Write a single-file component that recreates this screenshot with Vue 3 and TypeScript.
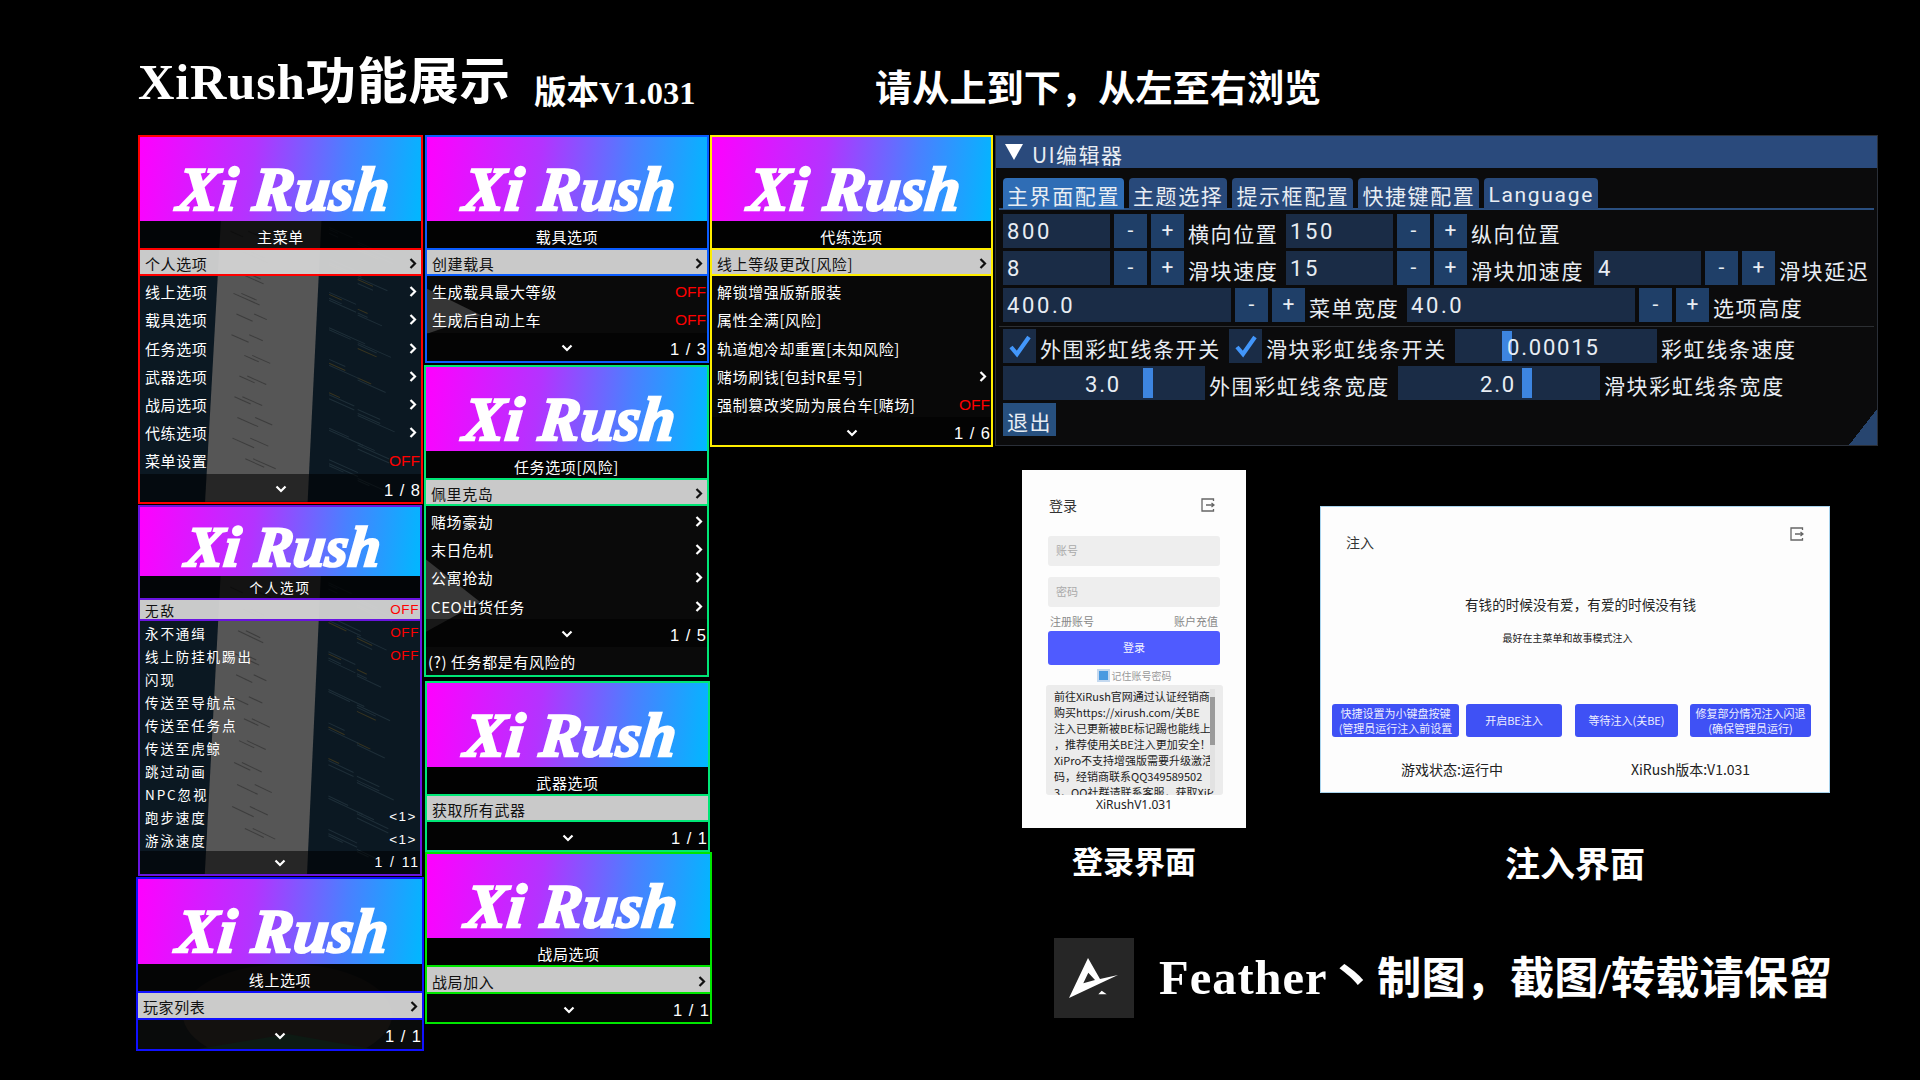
<template>
  <div class="page">
    <header class="head">
      <h1 class="title">XiRush功能展示</h1>
      <span class="version">版本V1.031</span>
      <span class="hint">请从上到下，从左至右浏览</span>
    </header>

    <main class="board">
      <div v-for="(col, c) in columns" :key="c" class="col" :class="`col-${c + 1}`">
        <section v-for="m in col" :key="m.title" class="menu" :class="m.cls">
          <div class="banner"><span class="logo">Xi Rush</span></div>
          <div class="menu-body">
            <svg v-if="m.bg" class="menu-bg" viewBox="0 0 285 285" preserveAspectRatio="none">
              <template v-if="m.bg === 'code'">
                <rect width="285" height="285" fill="#0b1822" />
                <polygon points="82,0 184,0 170,285 66,285" fill="#565656" />
                <rect
                  v-for="(l, i) in codeLines"
                  :key="i"
                  :x="l.x"
                  :y="l.y"
                  :width="l.w"
                  height="1"
                  :fill="l.c"
                  :transform="`rotate(24 ${l.x} ${l.y})`"
                />
              </template>
              <template v-else-if="m.bg === 'face'">
                <rect width="285" height="285" fill="#15191a" />
                <ellipse cx="150" cy="170" rx="105" ry="170" fill="#2a2623" />
                <polygon points="60,285 150,235 235,285" fill="#1d3a2a" />
              </template>
              <template v-else>
                <rect width="285" height="285" fill="#0a0a0a" />
                <polygon points="0,138 0,230 55,192" fill="#363636" />
              </template>
            </svg>
            <div class="menu-title">{{ m.title }}</div>
            <div
              v-for="(row, i) in m.rows"
              :key="row.label"
              class="row"
              :class="{ selected: i === 0 }"
            >
              <span class="row-label">{{ row.label }}</span>
              <svg v-if="row.right === 'arrow'" class="arrow" viewBox="0 0 8 12">
                <path d="M1.5 1.5 6 6l-4.5 4.5" fill="none" stroke="currentColor" stroke-width="2.2" />
              </svg>
              <span v-else-if="row.right === 'OFF'" class="off">OFF</span>
              <span v-else-if="row.right" class="value">{{ row.right }}</span>
            </div>
            <div class="menu-foot">
              <svg class="chevron" viewBox="0 0 12 8">
                <path d="M1.5 1.5 6 6l4.5-4.5" fill="none" stroke="#fff" stroke-width="2.2" />
              </svg>
              <span class="pager">{{ m.page }}</span>
            </div>
            <div v-if="m.note" class="menu-note">{{ m.note }}</div>
          </div>
        </section>
      </div>

      <div class="right">
        <section class="editor">
          <div class="editor-head">
            <span class="tri"></span>
            <span>UI编辑器</span>
          </div>
          <div class="tabs">
            <span
              v-for="(t, i) in tabs"
              :key="t"
              class="tab"
              :class="{ active: i === 0, latin: t === 'Language' }"
            >{{ t }}</span>
          </div>

          <div class="ed-row">
            <template v-for="f in row1" :key="f.label">
              <span class="ed-input" :class="f.cls">{{ f.value }}</span>
              <span class="ed-btn">-</span>
              <span class="ed-btn">+</span>
              <span class="ed-label" :class="f.cls">{{ f.label }}</span>
            </template>
          </div>
          <div class="ed-row">
            <template v-for="f in row2" :key="f.label">
              <span class="ed-input" :class="f.cls">{{ f.value }}</span>
              <span class="ed-btn">-</span>
              <span class="ed-btn">+</span>
              <span class="ed-label" :class="f.cls">{{ f.label }}</span>
            </template>
          </div>
          <div class="ed-row">
            <template v-for="f in row3" :key="f.label">
              <span class="ed-input wide">{{ f.value }}</span>
              <span class="ed-btn">-</span>
              <span class="ed-btn">+</span>
              <span class="ed-label" :class="f.cls">{{ f.label }}</span>
            </template>
          </div>
          <div class="ed-sep"></div>

          <div class="ed-row">
            <span class="ed-check">
              <svg viewBox="0 0 24 24"><path d="M3 13l6 7L21 3" fill="none" stroke="#4296fa" stroke-width="4.2" /></svg>
            </span>
            <span class="ed-label check-label">外围彩虹线条开关</span>
            <span class="ed-check">
              <svg viewBox="0 0 24 24"><path d="M3 13l6 7L21 3" fill="none" stroke="#4296fa" stroke-width="4.2" /></svg>
            </span>
            <span class="ed-label check-label">滑块彩虹线条开关</span>
            <span class="ed-slider speed">
              <i class="grab" :style="{ left: '47px' }"></i>
              <b>0.00015</b>
            </span>
            <span class="ed-label speed-label">彩虹线条速度</span>
          </div>
          <div class="ed-row">
            <span class="ed-slider">
              <i class="grab" :style="{ left: '140px' }"></i>
              <b class="mid">3.0</b>
            </span>
            <span class="ed-label width-label">外围彩虹线条宽度</span>
            <span class="ed-slider">
              <i class="grab" :style="{ left: '124px' }"></i>
              <b class="mid">2.0</b>
            </span>
            <span class="ed-label width-label">滑块彩虹线条宽度</span>
          </div>
          <div class="ed-row">
            <span class="ed-exit">退出</span>
          </div>
          <span class="grip"></span>
        </section>

        <div class="shots">
          <div class="shot shot-login">
            <div class="login">
              <div class="win-head">
                <span>登录</span>
                <svg class="exit" viewBox="0 0 14 14">
                  <path d="M12.5 3V1H1v12h11.500v-2M5 7h8M10.500 5l2.500 2-2.500 2" fill="none" stroke="#666" stroke-width="1.300" />
                </svg>
              </div>
              <div class="field">账号</div>
              <div class="field">密码</div>
              <div class="login-links"><span>注册账号</span><span>账户充值</span></div>
              <div class="login-btn">登录</div>
              <div class="remember"><i></i><span>记住账号密码</span></div>
              <div class="notice">
                <div class="notice-text">
                  <div v-for="l in noticeLines" :key="l">{{ l }}</div>
                </div>
                <span class="scroll"><i></i></span>
              </div>
              <div class="login-ver">XiRushV1.031</div>
            </div>
            <div class="caption">登录界面</div>
          </div>

          <div class="shot shot-inject">
            <div class="inject">
              <div class="win-head">
                <span>注入</span>
                <svg class="exit" viewBox="0 0 14 14">
                  <path d="M12.5 3V1H1v12h11.500v-2M5 7h8M10.500 5l2.500 2-2.500 2" fill="none" stroke="#666" stroke-width="1.300" />
                </svg>
              </div>
              <p class="inj-main">有钱的时候没有爱，有爱的时候没有钱</p>
              <p class="inj-sub">最好在主菜单和故事模式注入</p>
              <div class="inj-btns">
                <span class="b1">快捷设置为小键盘按键<br />(管理员运行注入前设置</span>
                <span class="b2">开启BE注入</span>
                <span class="b3">等待注入(关BE)</span>
                <span class="b4">修复部分情况注入闪退<br />(确保管理员运行)</span>
              </div>
              <div class="inj-foot">
                <span>游戏状态:运行中</span>
                <span>XiRush版本:V1.031</span>
              </div>
            </div>
            <div class="caption">注入界面</div>
          </div>
        </div>

        <div class="credit">
          <span class="credit-logo">
            <svg viewBox="0 0 80 80">
              <path
                fill-rule="evenodd"
                d="M34 20 46 41 64 37 15 60zM34.300 34.700 29.300 45.300 41 42z"
                fill="#fff"
              />
              <path d="M44.300 56.300 47.700 52.700 52.700 56.300z" fill="#fff" />
            </svg>
          </span>
          <span class="credit-text"><span class="credit-name">Feather丶</span>制图，截图/转载请保留</span>
        </div>
      </div>
    </main>
  </div>
</template>

<script setup lang="ts">
interface Row {
  label: string;
  right?: string;
}

interface Menu {
  title: string;
  cls: string;
  bg?: string;
  rows: Row[];
  page: string;
  note?: string;
}

const arrow = "arrow";

const columns: Menu[][] = [
  [
    {
      title: "主菜单",
      cls: "m-main",
      bg: "code",
      page: "1 / 8",
      rows: [
        { label: "个人选项", right: arrow },
        { label: "线上选项", right: arrow },
        { label: "载具选项", right: arrow },
        { label: "任务选项", right: arrow },
        { label: "武器选项", right: arrow },
        { label: "战局选项", right: arrow },
        { label: "代练选项", right: arrow },
        { label: "菜单设置", right: "OFF" },
      ],
    },
    {
      title: "个人选项",
      cls: "m-self",
      bg: "code",
      page: "1 / 11",
      rows: [
        { label: "无敌", right: "OFF" },
        { label: "永不通缉", right: "OFF" },
        { label: "线上防挂机踢出", right: "OFF" },
        { label: "闪现" },
        { label: "传送至导航点" },
        { label: "传送至任务点" },
        { label: "传送至虎鲸" },
        { label: "跳过动画" },
        { label: "NPC忽视" },
        { label: "跑步速度", right: "<1>" },
        { label: "游泳速度", right: "<1>" },
      ],
    },
    {
      title: "线上选项",
      cls: "m-online",
      bg: "face",
      page: "1 / 1",
      rows: [{ label: "玩家列表", right: arrow }],
    },
  ],
  [
    {
      title: "载具选项",
      cls: "m-car",
      bg: "dark",
      page: "1 / 3",
      rows: [
        { label: "创建载具", right: arrow },
        { label: "生成载具最大等级", right: "OFF" },
        { label: "生成后自动上车", right: "OFF" },
      ],
    },
    {
      title: "任务选项[风险]",
      cls: "m-task",
      bg: "dark",
      page: "1 / 5",
      note: "(?) 任务都是有风险的",
      rows: [
        { label: "佩里克岛", right: arrow },
        { label: "赌场豪劫", right: arrow },
        { label: "末日危机", right: arrow },
        { label: "公寓抢劫", right: arrow },
        { label: "CEO出货任务", right: arrow },
      ],
    },
    {
      title: "武器选项",
      cls: "m-weapon",
      page: "1 / 1",
      rows: [{ label: "获取所有武器" }],
    },
    {
      title: "战局选项",
      cls: "m-session",
      page: "1 / 1",
      rows: [{ label: "战局加入", right: arrow }],
    },
  ],
  [
    {
      title: "代练选项",
      cls: "m-boost",
      page: "1 / 6",
      rows: [
        { label: "线上等级更改[风险]", right: arrow },
        { label: "解锁增强版新服装" },
        { label: "属性全满[风险]" },
        { label: "轨道炮冷却重置[未知风险]" },
        { label: "赌场刷钱[包封R星号]", right: arrow },
        { label: "强制篡改奖励为展台车[赌场]", right: "OFF" },
      ],
    },
  ],
];

// faint code lines behind the two screenshot-backed menus
const codeLines = Array.from({ length: 70 }, (_, i) => {
  const inTree = i % 3 === 0;
  return {
    x: inTree ? 92 + ((i * 7) % 26) : 192 + ((i * 29) % 58),
    y: inTree ? 10 + (i % 36) * 7 : 4 + (i * 17) % 270,
    w: inTree ? 14 + ((i * 11) % 16) : 10 + ((i * 13) % 32),
    c: inTree ? "#3d3d3d" : i % 5 === 0 ? "#38341f" : "#1e2e38",
  };
});

const tabs = ["主界面配置", "主题选择", "提示框配置", "快捷键配置", "Language"];

const row1 = [
  { value: "800", label: "横向位置", cls: "" },
  { value: "150", label: "纵向位置", cls: "" },
];
const row2 = [
  { value: "8", label: "滑块速度", cls: "" },
  { value: "15", label: "滑块加速度", cls: "five" },
  { value: "4", label: "滑块延迟", cls: "" },
];
const row3 = [
  { value: "400.0", label: "菜单宽度", cls: "" },
  { value: "40.0", label: "选项高度", cls: "" },
];

const noticeLines = [
  "前往XiRush官网通过认证经销商",
  "购买https://xirush.com/关BE",
  "注入已更新被BE标记踢也能线上",
  "，推荐使用关BE注入更加安全！",
  "XiPro不支持增强版需要升级激活",
  "码，经销商联系QQ349589502",
  "3，QQ社群请联系客服，获取XiP",
];
</script>

<style>
html,
body {
  margin: 0;
  background: #000;
  overflow: hidden;
}
</style>

<style scoped>
.page {
  width: 1920px;
  height: 1080px;
  background: #000;
  color: #fff;
  font-family: "Noto Sans CJK SC", sans-serif;
  overflow: hidden;
}

.head {
  height: 135px;
  box-sizing: border-box;
  padding-left: 138px;
  display: flex;
  align-items: flex-start;
  font-family: "Liberation Serif", "Noto Sans CJK SC", serif;
  font-weight: 700;
}

.title {
  margin: 46px 0 0;
  width: 396px;
  font-size: 50.500px;
  line-height: 72px;
  font-weight: 700;
  letter-spacing: 0.800px;
  white-space: nowrap;
}

.version {
  margin-top: 69px;
  width: 341px;
  font-size: 32.500px;
  line-height: 48px;
  white-space: nowrap;
}

.hint {
  margin-top: 62px;
  font-size: 37.200px;
  line-height: 56px;
}

.board {
  display: flex;
  align-items: flex-start;
}

.col {
  display: flex;
  flex-direction: column;
  align-items: flex-start;
}

.col-1 {
  width: 288px;
  margin-left: 136px;
}

.col-2 {
  width: 286px;
}

.col-3 {
  width: 285px;
}

/* game menus */
.menu {
  --accent: #f00;
  --banner-h: 84px;
  --title-h: 27px;
  --row-h: 28.2px;
  --logo-size: 62px;
  --logo-top: 20px;
  --row-font: 15px;
  --row-space: 0.6px;
  --text-drop: 3px;
  box-sizing: border-box;
  border: 2px solid var(--accent);
  background: #080808;
  flex: none;
}

.m-main {
  width: 285px;
  margin-left: 2px;
}

.m-self {
  --accent: #6a14e0;
  --banner-h: 69px;
  --title-h: 22px;
  --row-h: 23px;
  --logo-size: 57px;
  --logo-top: 11px;
  --row-font: 13.500px;
  --row-space: 1.9px;
  --text-drop: 1px;
  width: 284px;
  margin: 1px 0 0 2px;
}

.m-online {
  --accent: #1010ff;
  --banner-h: 85px;
  --row-h: 29px;
  width: 288px;
  margin-top: 1px;
}

.m-car {
  --accent: #0a5cff;
  width: 284px;
  margin-left: 1px;
}

.m-task {
  --accent: #00e676;
  width: 285px;
  margin-top: 2px;
}

.m-weapon {
  --accent: #00e676;
  width: 285px;
  margin: 4px 0 0 1px;
}

.m-session {
  --accent: #00e600;
  --row-h: 28.6px;
  width: 287px;
  margin-left: 1px;
}

.m-boost {
  --accent: #ffee00;
  width: 283px;
}

.banner {
  height: var(--banner-h);
  box-sizing: border-box;
  padding: var(--logo-top) 0 0 7px;
  background: linear-gradient(97deg, #ff00ff 0%, #b433ff 40%, #4a80ff 72%, #00b8ff 100%);
  display: flex;
  align-items: center;
  justify-content: center;
}

.logo {
  font-family: "Liberation Serif", serif;
  font-style: italic;
  font-weight: 700;
  font-size: var(--logo-size);
  line-height: 1;
  white-space: nowrap;
  color: #fff;
  -webkit-text-stroke: 2.5px #fff;
  letter-spacing: 0.5px;
  transform: skewX(-6deg);
}

.menu-body {
  position: relative;
}

.menu-bg {
  position: absolute;
  inset: 0;
  width: 100%;
  height: 100%;
}

.menu-title,
.row,
.menu-foot,
.menu-note {
  position: relative;
}

.menu-title {
  height: var(--title-h);
  box-sizing: border-box;
  padding-top: var(--text-drop);
  line-height: calc(var(--title-h) - 1px);
  background: rgba(0, 0, 0, 0.78);
  text-align: center;
  font-size: var(--row-font);
  letter-spacing: var(--row-space);
}

.row {
  height: var(--row-h);
  display: flex;
  align-items: center;
  justify-content: space-between;
  box-sizing: border-box;
  padding: var(--text-drop) 3px 0 5px;
  font-size: var(--row-font);
  letter-spacing: var(--row-space);
  white-space: nowrap;
}

.row.selected {
  background: rgba(212, 212, 212, 0.95);
  color: #111;
  border-top: 2px solid var(--accent);
  border-bottom: 2px solid var(--accent);
}

.arrow {
  width: 8px;
  height: 13px;
  margin-right: 1px;
}

.off {
  color: #f00;
  font-family: "Liberation Sans", sans-serif;
  font-size: 15.500px;
  letter-spacing: 0;
  margin-right: -2px;
}

.m-self .off {
  font-size: 13.500px;
  letter-spacing: 0.6px;
}

.value {
  font-family: "Liberation Sans", sans-serif;
  font-size: 13.500px;
  letter-spacing: 1.500px;
}

.menu-foot {
  height: var(--row-h);
  box-sizing: border-box;
  padding-top: var(--text-drop);
  background: rgba(0, 0, 0, 0.55);
  display: flex;
  align-items: center;
  justify-content: center;
}

.chevron {
  width: 12px;
  height: 8px;
}

.pager {
  position: absolute;
  right: 0;
  top: calc(50% + 2px);
  transform: translateY(-50%);
  font-family: "Liberation Sans", sans-serif;
  font-size: 16.500px;
  letter-spacing: 1px;
  white-space: nowrap;
}

.m-self .pager {
  font-size: 14px;
  letter-spacing: 1.900px;
  top: 50%;
}

.menu-note {
  height: 28px;
  line-height: 30px;
  padding-left: 2px;
  font-size: 15px;
  letter-spacing: 0.6px;
}

/* ui editor */
.right {
  width: 883px;
}

.editor {
  position: relative;
  height: 311px;
  box-sizing: border-box;
  background: #0b0b0c;
  border: 1px solid #2a2f38;
  font-size: 21px;
  letter-spacing: 1.600px;
  color: #e8edf3;
}

.editor-head {
  height: 32px;
  background: #2a4a7c;
  display: flex;
  align-items: center;
  padding-left: 9px;
  gap: 9px;
  font-size: 21px;
  letter-spacing: 1.400px;
}

.editor-head span:last-child {
  padding-top: 3px;
}

.tri {
  width: 0;
  height: 0;
  border-left: 9px solid transparent;
  border-right: 9px solid transparent;
  border-top: 16px solid #fff;
}

.tabs {
  margin: 10px 3px 0;
  padding-left: 4px;
  display: flex;
  gap: 5px;
  height: 32px;
  box-sizing: border-box;
  border-bottom: 2px solid #2a4f80;
}

.tab {
  height: 31px;
  line-height: 35px;
  padding: 0 4px;
  box-sizing: border-box;
  background: #28497a;
  border-radius: 4px 4px 0 0;
  white-space: nowrap;
  flex: none;
}

.tab.active {
  background: #2f6db5;
}

.tab.latin {
  font-family: Roboto, sans-serif;
  letter-spacing: 1.700px;
  font-size: 21px;
  padding: 0 4px;
}

.ed-row {
  display: flex;
  gap: 4px;
  height: 34px;
  margin: 3px 0 0 7px;
  align-items: stretch;
}

.tabs + .ed-row {
  margin-top: 4px;
}

.ed-sep {
  height: 1px;
  background: #2c2f33;
  margin: 4px 3px -1px;
}

.ed-input {
  width: 107px;
  background: #1a2c46;
  line-height: 36px;
  padding-left: 4px;
  box-sizing: border-box;
  font-family: Roboto, sans-serif;
  font-size: 22px;
  letter-spacing: 2.600px;
  flex: none;
}

.ed-input.wide {
  width: 228px;
}

.ed-btn {
  width: 33px;
  background: #1f3f68;
  text-align: center;
  line-height: 32px;
  font-family: Roboto, sans-serif;
  letter-spacing: 0;
  flex: none;
}

.ed-label {
  width: 94px;
  line-height: 38px;
  white-space: nowrap;
  flex: none;
}

.ed-label.five {
  width: 119px;
}

.check-label {
  width: 185px;
}

.speed-label {
  width: 140px;
}

.width-label {
  width: 185px;
}

.ed-check {
  width: 33px;
  background: #1a2c46;
  display: flex;
  align-items: center;
  justify-content: center;
  flex: none;
}

.ed-check svg {
  width: 24px;
  height: 24px;
}

.ed-slider {
  position: relative;
  width: 202px;
  background: #1a2c46;
  line-height: 37px;
  font-family: Roboto, sans-serif;
  font-size: 22px;
  flex: none;
  display: block;
}

.ed-slider.speed {
  width: 202px;
}

.ed-slider b {
  position: absolute;
  font-weight: 400;
  letter-spacing: 1.800px;
  left: 52px;
}

.ed-slider b.mid {
  left: 82px;
}

.grab {
  position: absolute;
  top: 2px;
  bottom: 2px;
  width: 10px;
  background: #3d85e0;
}

.ed-exit {
  width: 53px;
  background: #27507f;
  text-align: center;
  line-height: 37px;
  height: 33px;
  overflow: hidden;
}

.grip {
  position: absolute;
  right: 0;
  bottom: 0;
  width: 28px;
  height: 36px;
  background: linear-gradient(to bottom right, transparent 50%, #27456f 50%);
}

/* screenshots of the loader */
.shots {
  display: flex;
  align-items: flex-start;
  margin-top: 24px;
  padding-left: 27px;
}

.shot {
  display: flex;
  flex-direction: column;
  align-items: center;
}

.caption {
  font-family: "Noto Sans CJK SC", sans-serif;
  font-weight: 700;
  font-size: 31px;
  line-height: 44px;
}

.win-head {
  display: flex;
  justify-content: space-between;
  align-items: center;
  font-size: 14px;
  color: #333;
}

.exit {
  width: 14px;
  height: 14px;
}

.login {
  width: 224px;
  height: 358px;
  box-sizing: border-box;
  padding: 26px 26px 0 26px;
  background: #fdfdfd;
  color: #555;
  display: flex;
  flex-direction: column;
  font-size: 11px;
}

.shot-login .caption {
  margin-top: 10px;
}

.login .win-head {
  height: 18px;
  margin-bottom: 22px;
  padding: 0 5px 0 1px;
}

.field {
  height: 30px;
  line-height: 28px;
  background: #eeeeee;
  border-radius: 3px;
  padding-left: 8px;
  color: #aaa;
  margin-bottom: 11px;
}

.login-links {
  display: flex;
  justify-content: space-between;
  color: #888;
  margin: -5px 2px 2px;
  line-height: 16px;
  height: 16px;
}

.login-btn {
  height: 34px;
  line-height: 33px;
  text-align: center;
  border-radius: 3px;
  background: #4f5bff;
  color: #f3f3ff;
}

.remember {
  display: flex;
  align-items: center;
  justify-content: center;
  gap: 2px;
  height: 20px;
  color: #999;
  font-size: 10px;
}

.remember i {
  width: 9px;
  height: 9px;
  background: #4a9ae0;
  border: 2px solid #c5d9ef;
}

.notice {
  position: relative;
  margin: 0 -3px 0 -2px;
  height: 110px;
  box-sizing: border-box;
  padding: 3px 14px 0 8px;
  background: #ececec;
  border-radius: 3px;
  overflow: hidden;
}

.notice-text {
  font-size: 11px;
  line-height: 16px;
  color: #222;
  white-space: nowrap;
}

.scroll {
  position: absolute;
  top: 4px;
  bottom: 4px;
  right: 8px;
  width: 5px;
  background: #e2e2e2;
}

.scroll i {
  display: block;
  margin-top: 8px;
  height: 48px;
  background: #9a9a9a;
}

.login-ver {
  text-align: center;
  color: #222;
  font-family: "Noto Sans", sans-serif;
  font-size: 12px;
  line-height: 20px;
}

.inject {
  width: 510px;
  height: 287px;
  box-sizing: border-box;
  padding: 0 11px;
  background: #fdfdfd;
  border: 1px solid #a9d4ee;
  color: #222;
}

.shot-inject {
  margin: 36px 0 0 74px;
}

.shot-inject .caption {
  margin-top: 47px;
  font-size: 35px;
}

.inject .win-head {
  height: 48px;
  padding: 20px 14px 0 14px;
  box-sizing: border-box;
  align-items: flex-start;
}

.inject .win-head span {
  margin-top: 5px;
}

.inj-main {
  margin: 39px 0 0;
  font-size: 13.600px;
  line-height: 20px;
  text-align: center;
  padding-left: 11px;
}

.inj-sub {
  margin: 16px 0 0;
  font-size: 10px;
  line-height: 16px;
  text-align: center;
  padding-right: 15px;
}

.inj-btns {
  display: flex;
  margin-top: 58px;
  height: 33px;
  font-size: 11px;
  line-height: 14.500px;
  color: #eef;
}

.inj-btns span {
  background: #3f51f5;
  border-radius: 3px;
  display: flex;
  align-items: center;
  justify-content: center;
  text-align: center;
  box-sizing: border-box;
  white-space: nowrap;
  flex: none;
}

.b1 {
  width: 127px;
}

.b2 {
  width: 96px;
  margin-left: 7px;
}

.b3 {
  width: 103px;
  margin-left: 13px;
}

.b4 {
  width: 121px;
  margin-left: 12px;
}

.inj-foot {
  display: flex;
  margin-top: 21px;
  padding-left: 69px;
  font-size: 14px;
  line-height: 22px;
  gap: 128px;
}

.credit {
  display: flex;
  align-items: center;
  margin: 54px 0 0 59px;
}

.credit-logo {
  width: 80px;
  height: 80px;
  background: #262626;
  flex: none;
}

.credit-logo svg {
  display: block;
  width: 80px;
  height: 80px;
}

.credit-text {
  margin-left: 25px;
  padding-bottom: 10px;
  font-family: "Liberation Serif", "Noto Sans CJK SC", serif;
  font-weight: 700;
  font-size: 44.300px;
  white-space: nowrap;
}

.credit-name {
  font-size: 48.500px;
  letter-spacing: 1px;
}
</style>
